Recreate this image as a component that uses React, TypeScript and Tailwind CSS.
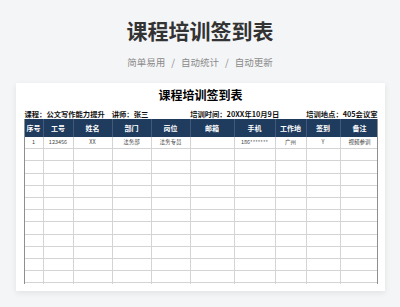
const cols = ['19px', '30px', '39px', '39px', '39px', '44px', '41px', '31px', '34px', '38px']
const heads = ['序号', '工号', '姓名', '部门', '岗位', '邮箱', '手机', '工作地', '签到', '备注']
const first = ['1', '123456', 'XX', '法务部', '法务专员', '', '186*******', '广州', 'Y', '视频参训']

export default function App() {
    const blank = Array.from({ length: 12 }, () => heads.map(() => ''))
    const rows = [first, ...blank]

    return (
        <div className="w-[400px] h-[307px] overflow-hidden bg-[#f4f5f7] flex flex-col items-center font-['Noto_Sans_CJK_SC',sans-serif]">
            <h1 className="mt-[19px] text-[21px] leading-[22px] font-bold text-[#333333]">课程培训签到表</h1>
            <p className="mt-[16px] text-[9.5px] leading-[10px] text-[#8a8a8a] flex gap-[6px]">
                <span>简单易用</span>
                <span>/</span>
                <span>自动统计</span>
                <span>/</span>
                <span>自动更新</span>
            </p>

            <div className="mt-[16px] w-[369px] h-[208px] bg-white shadow-[0_2px_6px_rgba(0,0,0,0.08)] pt-[6px] pl-[8px] pr-[7px] pb-[7px] flex flex-col">
                <div className="h-[12px] text-[12px] leading-[12px] font-bold text-black text-center">课程培训签到表</div>

                <div className="mt-[9px] h-[8px] flex items-center text-[7.3px] leading-[8px] font-bold text-[#111111] pl-[1px] whitespace-nowrap">
                    <span>课程：公文写作能力提升</span>
                    <span className="ml-[7px]">讲师：张三</span>
                    <span className="ml-auto mr-[27px]">培训时间：20XX年10月9日</span>
                    <span>培训地点：405会议室</span>
                </div>

                <div className="mt-[1px] h-[165px] overflow-hidden border-l-[1.5px] border-r-[1.5px] border-[#8f8f8f]">
                    <div className="grid" style={{ gridTemplateColumns: cols.join(' ') }}>
                        {heads.map((h, i) => (
                            <div
                                key={h}
                                className={`h-[18px] bg-[#1f3b5e] text-white text-[7px] font-bold flex items-center justify-center ${i < heads.length - 1 ? 'border-r border-[#41597a]' : ''}`}
                            >
                                {h}
                            </div>
                        ))}
                        {rows.map((r, ri) =>
                            r.map((c, ci) => (
                                <div
                                    key={`${ri}-${ci}`}
                                    className={`h-[12.2px] border-b border-[#d4d4d4] text-[5.5px] text-[#444444] flex items-center justify-center ${ci < r.length - 1 ? 'border-r' : ''}`}
                                >
                                    {c}
                                </div>
                            ))
                        )}
                    </div>
                </div>
            </div>
        </div>
    )
}
